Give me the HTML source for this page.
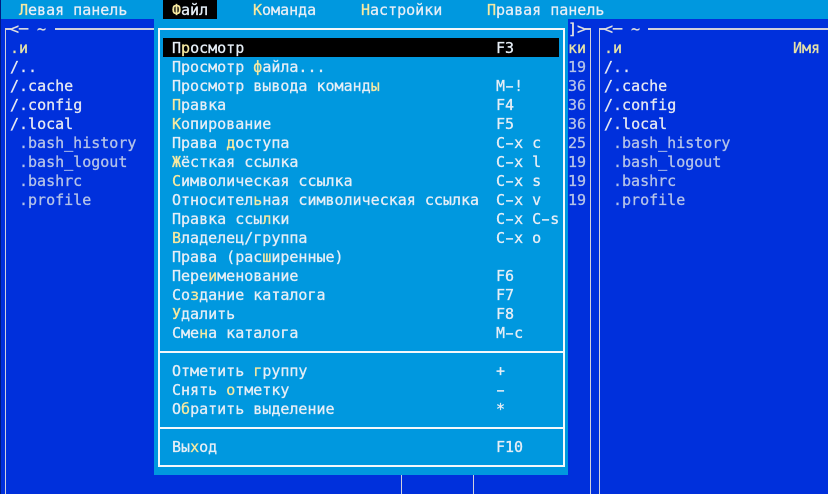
<!DOCTYPE html>
<html lang="ru"><head><meta charset="utf-8"><title>mc</title>
<style>
html,body{margin:0;padding:0;background:#0030dc;width:828px;height:494px;overflow:hidden}
#s{position:relative;width:828px;height:494px;overflow:hidden;background:#0030dc;font:15px/19px "DejaVu Sans Mono",monospace;color:#e6eef6}
.t{position:absolute;white-space:pre;height:19px;margin-top:1px;-webkit-text-stroke:.3px currentColor}
.b{position:absolute}
.l{background:#d0d0dc}
.w{background:#f4f8fb}
i{font-style:normal;color:#f6e9a0}
.d{color:#e6e8f2}
.f{color:#b4c2e8}
.h{color:#e6e2a8}
.n{color:#e0e0e0}
.m{display:inline-block;font-weight:normal;transform:scaleX(1.7)}
</style></head><body><div id="s">
<div class="b" style="left:0;top:0;width:1px;height:494px;background:#001a80"></div>
<div class="b" style="left:1px;top:0;width:827px;height:19px;background:#0098df"></div>
<div class="b" style="left:163px;top:0;width:54px;height:19px;background:#000"></div>
<div class="t" style="left:19px;top:0"><i>Л</i>евая панель</div>
<div class="t" style="left:172px;top:0"><i>Ф</i>айл</div>
<div class="t" style="left:253px;top:0"><i>К</i>оманда</div>
<div class="t" style="left:361px;top:0"><i>Н</i>астройки</div>
<div class="t" style="left:487px;top:0"><i>П</i>равая панель</div>

<div class="b l" style="left:5px;top:28px;width:1px;height:466px"></div>
<div class="b l" style="left:5px;top:28px;width:6px;height:2px"></div>
<div class="t n" style="left:10px;top:19px">&lt;─</div>
<div class="t n" style="left:37px;top:19px">~</div>
<div class="b l" style="left:55px;top:28px;width:100px;height:2px"></div>
<div class="t h" style="left:10px;top:38px">.и</div>
<div class="t d" style="left:10px;top:57px">/..</div>
<div class="t d" style="left:10px;top:76px">/.cache</div>
<div class="t d" style="left:10px;top:95px">/.config</div>
<div class="t d" style="left:10px;top:114px">/.local</div>
<div class="t f" style="left:19px;top:133px">.bash_history</div>
<div class="t f" style="left:19px;top:152px">.bash_logout</div>
<div class="t f" style="left:19px;top:171px">.bashrc</div>
<div class="t f" style="left:19px;top:190px">.profile</div>

<div class="b l" style="left:401px;top:475px;width:1px;height:19px"></div>
<div class="b l" style="left:473px;top:475px;width:1px;height:19px"></div>
<div class="b l" style="left:590px;top:28px;width:1px;height:466px"></div>
<div class="b l" style="left:585px;top:28px;width:6px;height:2px"></div>
<div class="t n" style="left:568px;top:19px">]&gt;</div>
<div class="t h" style="left:568px;top:38px">ки</div>
<div class="t f" style="left:568px;top:57px">19</div>
<div class="t f" style="left:568px;top:76px">36</div>
<div class="t f" style="left:568px;top:95px">36</div>
<div class="t f" style="left:568px;top:114px">36</div>
<div class="t f" style="left:568px;top:133px">25</div>
<div class="t f" style="left:568px;top:152px">19</div>
<div class="t f" style="left:568px;top:171px">19</div>
<div class="t f" style="left:568px;top:190px">19</div>

<div class="b l" style="left:599px;top:28px;width:1px;height:466px"></div>
<div class="b l" style="left:599px;top:28px;width:6px;height:2px"></div>
<div class="t n" style="left:604px;top:19px">&lt;─</div>
<div class="t n" style="left:631px;top:19px">~</div>
<div class="b l" style="left:648px;top:28px;width:180px;height:2px"></div>
<div class="t h" style="left:604px;top:38px">.и</div>
<div class="t h" style="left:793px;top:38px">Имя</div>
<div class="t d" style="left:604px;top:57px">/..</div>
<div class="t d" style="left:604px;top:76px">/.cache</div>
<div class="t d" style="left:604px;top:95px">/.config</div>
<div class="t d" style="left:604px;top:114px">/.local</div>
<div class="t f" style="left:613px;top:133px">.bash_history</div>
<div class="t f" style="left:613px;top:152px">.bash_logout</div>
<div class="t f" style="left:613px;top:171px">.bashrc</div>
<div class="t f" style="left:613px;top:190px">.profile</div>

<div class="b" style="left:154px;top:19px;width:414px;height:456px;background:#0098df"></div>
<div class="b w" style="left:158px;top:28px;width:2px;height:438px"></div>
<div class="b w" style="left:563px;top:28px;width:2px;height:438px"></div>
<div class="b w" style="left:158px;top:28px;width:407px;height:2px"></div>
<div class="b w" style="left:158px;top:351px;width:407px;height:2px"></div>
<div class="b w" style="left:158px;top:427px;width:407px;height:2px"></div>
<div class="b w" style="left:158px;top:465px;width:407px;height:2px"></div>
<div class="b" style="left:163px;top:38px;width:396px;height:19px;background:#000"></div>

<div class="t" style="left:172px;top:38px">П<i>р</i>осмотр</div><div class="t" style="left:496px;top:38px">F3</div>
<div class="t" style="left:172px;top:57px">Просмотр <i>ф</i>айла...</div>
<div class="t" style="left:172px;top:76px">Просмотр вывода команд<i>ы</i></div><div class="t" style="left:496px;top:76px">M<span class="m">-</span>!</div>
<div class="t" style="left:172px;top:95px"><i>П</i>равка</div><div class="t" style="left:496px;top:95px">F4</div>
<div class="t" style="left:172px;top:114px"><i>К</i>опирование</div><div class="t" style="left:496px;top:114px">F5</div>
<div class="t" style="left:172px;top:133px">Права <i>д</i>оступа</div><div class="t" style="left:496px;top:133px">C<span class="m">-</span>x c</div>
<div class="t" style="left:172px;top:152px"><i>Ж</i>ёсткая ссылка</div><div class="t" style="left:496px;top:152px">C<span class="m">-</span>x l</div>
<div class="t" style="left:172px;top:171px"><i>С</i>имволическая ссылка</div><div class="t" style="left:496px;top:171px">C<span class="m">-</span>x s</div>
<div class="t" style="left:172px;top:190px">Относител<i>ь</i>ная символическая ссылка</div><div class="t" style="left:496px;top:190px">C<span class="m">-</span>x v</div>
<div class="t" style="left:172px;top:209px">Правка ссы<i>л</i>ки</div><div class="t" style="left:496px;top:209px">C<span class="m">-</span>x C<span class="m">-</span>s</div>
<div class="t" style="left:172px;top:228px"><i>В</i>ладелец/группа</div><div class="t" style="left:496px;top:228px">C<span class="m">-</span>x o</div>
<div class="t" style="left:172px;top:247px">Права (рас<i>ш</i>иренные)</div>
<div class="t" style="left:172px;top:266px">Пере<i>и</i>менование</div><div class="t" style="left:496px;top:266px">F6</div>
<div class="t" style="left:172px;top:285px">Со<i>з</i>дание каталога</div><div class="t" style="left:496px;top:285px">F7</div>
<div class="t" style="left:172px;top:304px"><i>У</i>далить</div><div class="t" style="left:496px;top:304px">F8</div>
<div class="t" style="left:172px;top:323px">Сме<i>н</i>а каталога</div><div class="t" style="left:496px;top:323px">M<span class="m">-</span>c</div>
<div class="t" style="left:172px;top:361px">Отметить <i>г</i>руппу</div><div class="t" style="left:496px;top:361px">+</div>
<div class="t" style="left:172px;top:380px">Снять <i>о</i>тметку</div><div class="t" style="left:496px;top:380px"><span class="m">-</span></div>
<div class="t" style="left:172px;top:399px">О<i>б</i>ратить выделение</div><div class="t" style="left:496px;top:399px">*</div>
<div class="t" style="left:172px;top:437px">Вы<i>х</i>од</div><div class="t" style="left:496px;top:437px">F10</div>
</div></body></html>
